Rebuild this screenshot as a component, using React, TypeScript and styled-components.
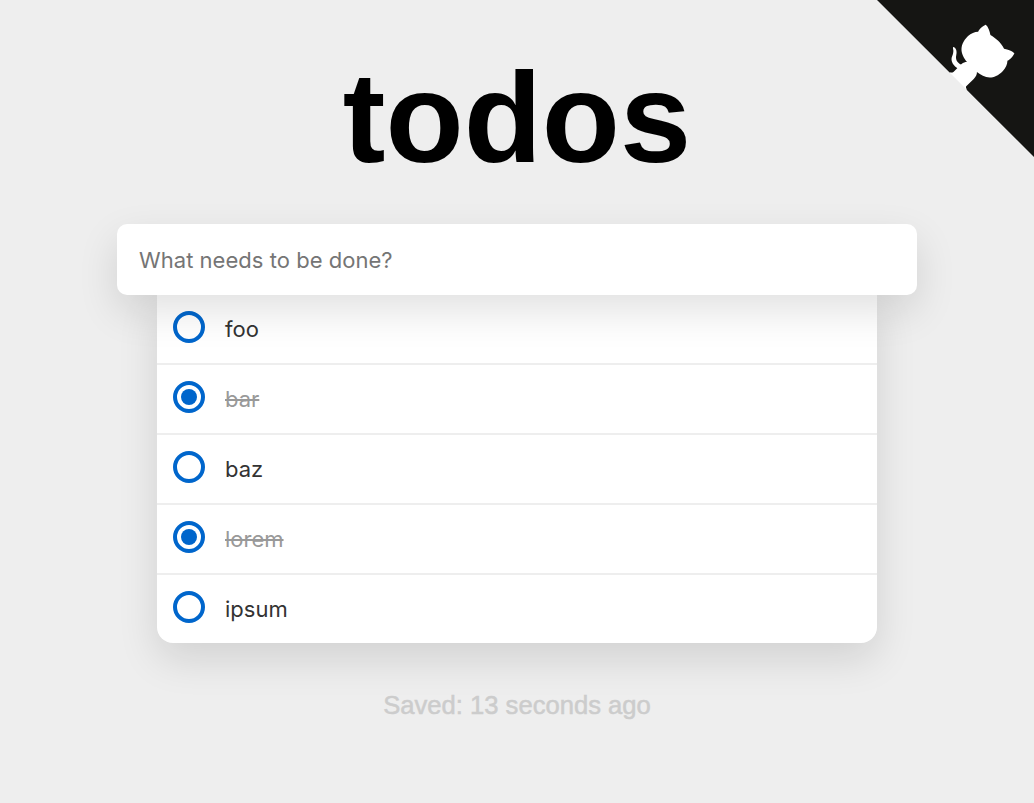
import React, { useState } from "react";
import styled, { createGlobalStyle } from "styled-components";

const GlobalStyle = createGlobalStyle`
  *, *::before, *::after { box-sizing: border-box; }
  html { overflow: hidden; background: #eee; }
  body { margin: 0; }
`;

const Page = styled.main`
  position: relative;
  display: flex;
  flex-direction: column;
  align-items: center;
  min-height: 803px;
  overflow: hidden;
  background: #eee;
  font-family: "Liberation Sans", Helvetica, Arial, sans-serif;
`;

const CornerLink = styled.a`
  position: absolute;
  top: -1px;
  right: -2px;
  width: 160px;
  height: 160px;
`;

const CornerArt = styled.svg`
  display: block;
  width: 160px;
  height: 160px;
  color: #fff;
  fill: #151513;
`;

const Title = styled.h1`
  margin: 45px 0 0;
  height: 179px;
  font-size: 128px;
  line-height: 146px;
  font-weight: 700;
  color: #000;
`;

const NewTodo = styled.input`
  position: relative;
  z-index: 1;
  width: 800px;
  height: 71px;
  padding: 0 22px;
  border: 0;
  border-radius: 10px;
  outline: 0;
  background: #fff;
  box-shadow: 0 16px 40px rgba(0, 0, 0, 0.12);
  font: 400 22px Inter, sans-serif;
  letter-spacing: 0.03px;
  color: #333;
  &::placeholder { color: #757575; opacity: 1; }
`;

const List = styled.ul`
  width: 720px;
  margin: 0;
  padding: 0;
  list-style: none;
  border-radius: 0 0 16px 16px;
  background: #fff;
  box-shadow: 0 16px 40px rgba(0, 0, 0, 0.12);
`;

const Row = styled.li`
  display: flex;
  align-items: flex-start;
  gap: 20px;
  height: 70px;
  padding: 16px;
  border-bottom: 2px solid #eee;
  &:last-child { height: 68px; border-bottom: 0; }
`;

const Toggle = styled.button<{ $done: boolean }>`
  display: grid;
  place-items: center;
  flex: none;
  width: 32px;
  height: 32px;
  padding: 0;
  border: 4px solid #0066cc;
  border-radius: 50%;
  background: transparent;
  &::after {
    content: "";
    width: 16px;
    height: 16px;
    border-radius: 50%;
    background: ${(p) => (p.$done ? "#0066cc" : "transparent")};
  }
`;

const Label = styled.span<{ $done: boolean }>`
  font: 400 22px/36px Inter, sans-serif;
  color: ${(p) => (p.$done ? "#999" : "#333")};
  text-decoration: ${(p) => (p.$done ? "line-through" : "none")};
`;

const Status = styled.p`
  margin: 47px 0 0;
  font-size: 25.6px;
  line-height: 30px;
  color: #ccc;
  -webkit-text-stroke: 0.5px #ccc;
`;

const initialTodos = [
  { text: "foo", done: false },
  { text: "bar", done: true },
  { text: "baz", done: false },
  { text: "lorem", done: true },
  { text: "ipsum", done: false },
];

export default function App() {
  const [todos, setTodos] = useState(initialTodos);
  const toggle = (index: number) =>
    setTodos(todos.map((t, i) => (i === index ? { ...t, done: !t.done } : t)));

  return (
    <Page>
      <GlobalStyle />
      <CornerLink href="#" aria-label="View source on GitHub">
        <CornerArt viewBox="0 0 250 250" aria-hidden="true">
          <path d="M0,0 L115,115 L130,115 L142,142 L250,250 L250,0 Z" />
          <path
            fill="currentColor"
            d="M128.3,109.0 C113.8,99.7 119.0,89.6 119.0,89.6 C122.0,82.7 120.5,78.6 120.5,78.6 C119.2,72.0 123.4,76.3 123.4,76.3 C127.3,80.9 125.5,87.3 125.5,87.3 C122.9,97.6 130.6,101.9 134.4,103.2"
          />
          <path
            fill="currentColor"
            d="M115.0,115.0 C114.9,115.1 118.7,116.5 119.8,115.4 L133.7,101.6 C136.9,99.2 139.9,98.4 142.2,98.6 C133.8,88.0 127.5,74.4 143.8,58.0 C148.5,53.4 154.0,51.2 159.7,51.0 C160.3,49.4 163.2,43.6 171.4,40.1 C171.4,40.1 176.1,42.5 178.8,56.2 C183.1,58.6 187.2,61.8 190.9,65.4 C194.5,69.0 197.7,73.2 200.1,77.6 C213.8,80.2 216.3,84.9 216.3,84.9 C212.7,93.1 206.9,96.0 205.4,96.6 C205.1,102.4 203.0,107.8 198.3,112.5 C181.9,128.9 168.3,122.5 157.7,114.1 C157.9,116.9 156.7,120.9 152.7,124.9 L141.0,136.5 C139.8,137.7 141.6,141.9 141.8,141.8 Z"
          />
        </CornerArt>
      </CornerLink>
      <Title>todos</Title>
      <NewTodo placeholder="What needs to be done?" />
      <List>
        {todos.map((todo, i) => (
          <Row key={todo.text}>
            <Toggle
              $done={todo.done}
              aria-label={todo.text}
              aria-pressed={todo.done}
              onClick={() => toggle(i)}
            />
            <Label $done={todo.done}>{todo.text}</Label>
          </Row>
        ))}
      </List>
      <Status>Saved: 13 seconds ago</Status>
    </Page>
  );
}
